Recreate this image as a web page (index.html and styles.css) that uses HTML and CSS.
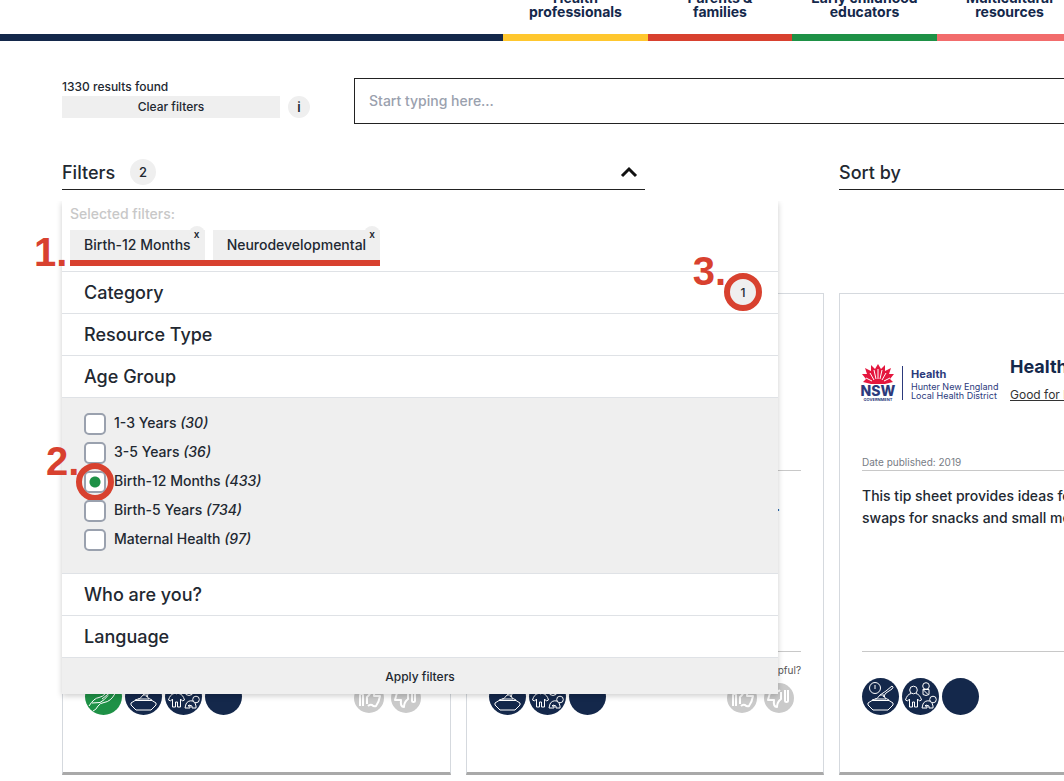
FILE: index.html
```html
<!DOCTYPE html>
<html lang="en">
<head>
<meta charset="utf-8">
<meta name="viewport" content="width=device-width, initial-scale=1">
<title>Resource library</title>
<link rel="stylesheet" href="styles.css">
</head>
<body>
<svg class="sprite" aria-hidden="true">
  <symbol id="bowl" viewBox="0 0 37 37">
    <circle cx="13" cy="10" r="5.5"/><path d="M13 7v4M6 25l4-2.500h17l4 2.500v2l-5 5H11l-5-5zM10 22l5-1.500 3-3.500h4l1 3 4 2M18 17l6-4 6-5q2 1 0 3l-6 4-3 4M13 21h11"/>
  </symbol>
  <symbol id="family" viewBox="0 0 37 37">
    <circle cx="11.500" cy="12" r="3.800"/><path d="M9 15.500q-4 1-5.500 6.500l2 1 2-2v8h3v-5h2v5h3v-8l2 2 2-1q-1.500-5.500-5.500-6.500"/>
    <circle cx="24" cy="8" r="3.300"/><path d="M21 11.500h6v5q-3 2-6 0zM21 11.500l5 5"/>
    <circle cx="31" cy="21.500" r="3.300"/><path d="M28 23q-5-1-7 3l-1 4h5v-2h-2l1-1 3 1v2h4v-2l-1-3"/>
  </symbol>
  <symbol id="hands" viewBox="0 0 37 37">
    <path d="M4 28q5-8 10-8.500 3 0 8-5.500M7 25l8-.500q4-2 8-7M8 33q3-1 5-5 2-3 6-3.500 7-1 11-9M17 21l10-8"/>
  </symbol>
  <symbol id="thumb" viewBox="0 0 30 30">
    <path d="M6 23V12q0-1 1.500-1T9 12v11M13 21v-7q4-3 4-8 4 0 3 7h6q-1 6-4 10-2 1-4-1-2-1-4 1"/>
  </symbol>
</svg>

<header class="header">
  <nav class="nav" aria-label="Audience">
    <span class="nav-lead"></span>
    <a class="nav-item yellow" href="#">Health<br>professionals</a>
    <a class="nav-item red" href="#">Parents &amp;<br>families</a>
    <a class="nav-item green" href="#">Early childhood<br>educators</a>
    <a class="nav-item pink" href="#">Multicultural<br>resources</a>
  </nav>
</header>

<main class="page">
  <section class="search-row">
    <div class="results">
      <p class="count">1330 results found</p>
      <div class="clear-row">
        <button class="clear" type="button">Clear filters</button>
        <button class="info" type="button" aria-label="Information">i</button>
      </div>
    </div>
    <input class="search" type="text" placeholder="Start typing here..." aria-label="Search resources">
  </section>

  <section class="controls">
    <div class="filters">
      <button class="control" type="button" aria-expanded="true">
        <span>Filters</span><span class="badge">2</span>
        <svg class="chevron" viewBox="0 0 18 12"><path d="M2 10l7-7 7 7"/></svg>
      </button>
      <div class="panel">
        <div class="selected">
          <p class="selected-title">Selected filters:</p>
          <div class="chips">
            <button class="chip" type="button">Birth-12 Months<span class="chip-x">x</span></button>
            <button class="chip" type="button">Neurodevelopmental<span class="chip-x">x</span></button>
            <span class="mark mark-one">1.</span>
          </div>
        </div>
        <button class="group" type="button">Category
          <span class="group-count">1<span class="ring"></span></span>
          <span class="mark mark-three">3.</span>
        </button>
        <button class="group" type="button">Resource Type</button>
        <button class="group" type="button">Age Group</button>
        <div class="options">
          <label class="option"><input type="checkbox"><span>1-3 Years <i>(30)</i></span></label>
          <label class="option"><input type="checkbox"><span>3-5 Years <i>(36)</i></span></label>
          <label class="option"><input type="checkbox" checked><span>Birth-12 Months <i>(433)</i></span><span class="ring ring-option"></span><span class="mark mark-two">2.</span></label>
          <label class="option"><input type="checkbox"><span>Birth-5 Years <i>(734)</i></span></label>
          <label class="option"><input type="checkbox"><span>Maternal Health <i>(97)</i></span></label>
        </div>
        <button class="group" type="button">Who are you?</button>
        <button class="group" type="button">Language</button>
        <button class="apply" type="button">Apply filters</button>
      </div>
    </div>
    <button class="control" type="button">Sort by</button>
  </section>

  <section class="cards">
    <article class="card">
      <div class="card-head"></div>
      <div class="card-body"></div>
      <div class="card-foot">
        <div class="topics">
          <svg class="topic topic-green"><use href="#hands"/></svg>
          <svg class="topic"><use href="#bowl"/></svg>
          <svg class="topic"><use href="#family"/></svg>
          <svg class="topic"></svg>
        </div>
        <div class="votes">
          <button class="vote" type="button" aria-label="Helpful"><svg><use href="#thumb"/></svg></button>
          <button class="vote vote-down" type="button" aria-label="Not helpful"><svg><use href="#thumb"/></svg></button>
        </div>
      </div>
    </article>
    <article class="card">
      <div class="card-head"></div>
      <div class="card-body"><p class="desc desc-end">.</p></div>
      <div class="card-foot">
        <div class="topics">
          <svg class="topic"><use href="#bowl"/></svg>
          <svg class="topic"><use href="#family"/></svg>
          <svg class="topic"></svg>
        </div>
        <div class="feedback">
          <p class="helpful">helpful?</p>
          <div class="votes">
            <button class="vote" type="button" aria-label="Helpful"><svg><use href="#thumb"/></svg></button>
            <button class="vote vote-down" type="button" aria-label="Not helpful"><svg><use href="#thumb"/></svg></button>
          </div>
        </div>
      </div>
    </article>
    <article class="card">
      <div class="card-head">
        <div class="brand">
          <div class="nsw">
            <svg class="waratah" viewBox="0 0 32 20">
              <path d="M16 0l3 5 4-4v6l6-3-2 6 5 0-4 5 3 3-8 2H9l-8-2 3-3-4-5h5L3 4l6 3V1l4 4z"/>
              <path class="veins" d="M16 5v10M12 6l2 9M20 6l-2 9M8 9l4 7M24 9l-4 7M4 14l6 3M28 14l-6 3"/>
            </svg>
            <span class="nsw-name">NSW</span>
            <span class="nsw-gov">GOVERNMENT</span>
          </div>
          <p class="district"><b>Health</b>Hunter New England<br>Local Health District</p>
        </div>
        <div class="card-title">
          <h2>Healthy snacks</h2>
          <a href="#">Good for kids</a>
        </div>
        <p class="date">Date published: 2019</p>
      </div>
      <div class="card-body"><p class="desc">This tip sheet provides ideas for healthy<br>swaps for snacks and small meals.</p></div>
      <div class="card-foot">
        <div class="topics">
          <svg class="topic"><use href="#bowl"/></svg>
          <svg class="topic"><use href="#family"/></svg>
          <svg class="topic"></svg>
        </div>
      </div>
    </article>
  </section>
</main>
</body>
</html>
```
FILE: styles.css
```css
* { box-sizing: border-box; }
html { overflow: hidden; }
body {
  margin: 0;
  background: #fff;
  color: #222831;
  font-family: Inter, "Liberation Sans", sans-serif;
  font-weight: 500;
  overflow: hidden;
}
p, h2 { margin: 0; }
button { font: inherit; color: inherit; border: 0; padding: 0; background: none; cursor: pointer; }
.sprite { display: none; }

.header { overflow: hidden; }
.nav {
  display: grid;
  grid-template-columns: 503fr 145fr 144fr 145fr 145fr;
  width: calc(100% + 18px);
  margin-top: -9px;
}
.nav-lead, .nav-item { border-bottom: 7px solid #14284b; }
.nav-item {
  padding-bottom: 15px;
  color: #14284b;
  font-size: 14px;
  font-weight: 700;
  line-height: 14px;
  text-align: center;
  text-decoration: none;
}
.nav-item.yellow { border-color: #ffc72e; }
.nav-item.red { border-color: #d8412f; }
.nav-item.green { border-color: #1e9146; }
.nav-item.pink { border-color: #f26c6c; }

.page { width: calc(100% + 140px); padding: 37px 0 0 62px; }
.search-row { display: flex; gap: 44px; }
.results { flex: none; width: 248px; font-size: 12px; line-height: 18px; }
.clear-row { display: flex; gap: 8px; }
.clear { flex: none; width: 218px; height: 22px; background: #efefef; }
.info { width: 22px; height: 22px; border-radius: 50%; background: #efefef; font-size: 13px; font-weight: 600; }
.search {
  flex: 1;
  height: 46px;
  padding: 0 14px 2px;
  border: 1px solid #222;
  font: inherit;
  font-size: 14px;
}
.search::placeholder { color: #9aa1ae; opacity: 1; }

.controls { display: flex; gap: 194px; margin-top: 31px; }
.filters { position: relative; flex: none; width: 583px; }
.control {
  display: flex;
  align-items: center;
  gap: 15px;
  width: 100%;
  height: 35px;
  border-bottom: 1px solid #222;
  font-size: 18px;
}
.badge {
  width: 26px;
  height: 26px;
  border-radius: 50%;
  background: #efefef;
  font-size: 13px;
  line-height: 26px;
}
.chevron { width: 18px; height: 12px; margin-left: auto; margin-right: 7px; }
.chevron path { fill: none; stroke: #111; stroke-width: 3; }

.panel {
  position: absolute;
  z-index: 2;
  top: 46px;
  left: 0;
  width: 716px;
  background: #fff;
  box-shadow: 0 2px 6px rgba(0, 0, 0, .2);
  clip-path: inset(0 -8px -8px -40px);
}
.selected { padding: 3px 8px 5px; }
.selected-title { color: #c8c8c8; font-size: 14px; line-height: 20px; }
.chips {
  position: relative;
  display: flex;
  gap: 8px;
  width: max-content;
  margin-top: 6px;
  border-bottom: 6px solid #d8412f;
}
.chip { position: relative; height: 30px; padding: 0 14px; background: #efefef; font-size: 14px; line-height: 28px; }
.chip-x {
  position: absolute;
  top: -4px;
  right: 0;
  width: 16px;
  height: 16px;
  border-radius: 50%;
  background: #efefef;
  font-size: 10px;
  font-weight: 600;
  line-height: 16px;
}
.group {
  position: relative;
  display: block;
  width: 100%;
  height: 42px;
  padding: 0 22px;
  border-top: 1px solid #dfe2e6;
  font-size: 18px;
  line-height: 40px;
  text-align: left;
}
.group-count {
  position: absolute;
  top: 7px;
  right: 22px;
  width: 26px;
  height: 26px;
  border-radius: 50%;
  background: #efefef;
  font-size: 12px;
  line-height: 28px;
  text-align: center;
}
.ring {
  position: absolute;
  top: -6px;
  left: -6px;
  width: 38px;
  height: 38px;
  border: 6px solid #d8412f;
  border-radius: 50%;
}
.mark {
  position: absolute;
  color: #d8412f;
  font-family: "Liberation Sans", Arial, sans-serif;
  font-size: 40px;
  font-weight: 700;
  line-height: 40px;
}
.mark-one { top: 2px; left: -36px; }
.mark-two { top: -26px; left: -38px; }
.mark-three { top: -21px; right: 52px; }

.options { padding: 11px 22px 19px; border-top: 1px solid #dfe2e6; background: #efefef; }
.option { position: relative; display: flex; gap: 8px; height: 29px; font-size: 14px; line-height: 28px; }
.option input {
  flex: none;
  appearance: none;
  width: 22px;
  height: 22px;
  margin: 4px 0 0;
  border: 2px solid #9aa1ae;
  border-radius: 5px;
  background: #fff;
}
.option input:checked { background: radial-gradient(circle, #1e9146 5px, #fff 6px); }
.ring-option { left: -8px; top: -4px; }
.apply { display: block; width: 100%; height: 37px; border-top: 1px solid #dfe2e6; background: #efefef; font-size: 12px; }

.cards { display: grid; grid-template-columns: 389fr 358fr 365fr; gap: 15px; margin-top: 103px; }
.card {
  display: flex;
  flex-direction: column;
  padding: 0 22px 56px;
  border: 1px solid #d5d9de;
  border-bottom: 3px solid #a9a9a9;
  min-width: 0;
}
.card-head {
  display: flex;
  flex-wrap: wrap;
  align-content: space-between;
  gap: 0 14px;
  height: 177px;
  padding-top: 62px;
  border-bottom: 1px solid #c8c8c8;
}
.card-body { height: 181px; padding-top: 14px; border-bottom: 1px solid #c8c8c8; }
.brand { display: flex; width: 134px; padding-top: 8px; color: #2c3a7c; }
.nsw { display: flex; flex-direction: column; align-items: center; width: 32px; }
.waratah { width: 32px; height: 20px; fill: #e4173e; }
.veins { fill: none; stroke: #fff; stroke-width: 1; }
.nsw-name { font-size: 14px; font-weight: 800; line-height: 13px; }
.nsw-gov { font-size: 4px; font-weight: 700; line-height: 5px; }
.district {
  height: 34px;
  margin-top: 2px;
  margin-left: 8px;
  padding-left: 8px;
  border-left: 1px solid #2c3a7c;
  font-size: 9px;
  font-weight: 400;
  line-height: 9px;
  white-space: nowrap;
}
.district b { display: block; font-size: 11px; line-height: 16px; }
.card-title { width: 140px; white-space: nowrap; }
.card-title h2 { color: #14284b; font-size: 18px; font-weight: 700; line-height: 22px; }
.card-title a { display: block; margin-top: 8px; color: #333; font-size: 12px; font-weight: 400; line-height: 18px; }
.date { width: 100%; color: #777c85; font-size: 10px; font-weight: 400; line-height: 16px; }
.desc { font-size: 14px; line-height: 22px; white-space: nowrap; }
.desc-end { padding-top: 10px; padding-right: 21px; text-align: right; }
.card-foot { position: relative; display: flex; justify-content: space-between; height: 64px; padding: 26px 7px 0 0; }
.topics { display: flex; gap: 3px; }
.topic { width: 37px; height: 37px; border-radius: 50%; background: #14284b; fill: none; stroke: #fff; stroke-width: 1; stroke-linejoin: round; }
.topic-green { background: #1e9146; }
.votes { display: flex; gap: 7px; padding-top: 5px; }
.vote { width: 30px; height: 30px; border-radius: 50%; background: #cacaca; }
.vote svg { display: block; width: 30px; height: 30px; fill: none; stroke: #fff; stroke-width: 2; stroke-linejoin: round; }
.vote-down { transform: rotate(180deg); }
.helpful { position: absolute; top: 10px; right: 0; color: #555; font-size: 10px; font-weight: 400; line-height: 16px; }
```
